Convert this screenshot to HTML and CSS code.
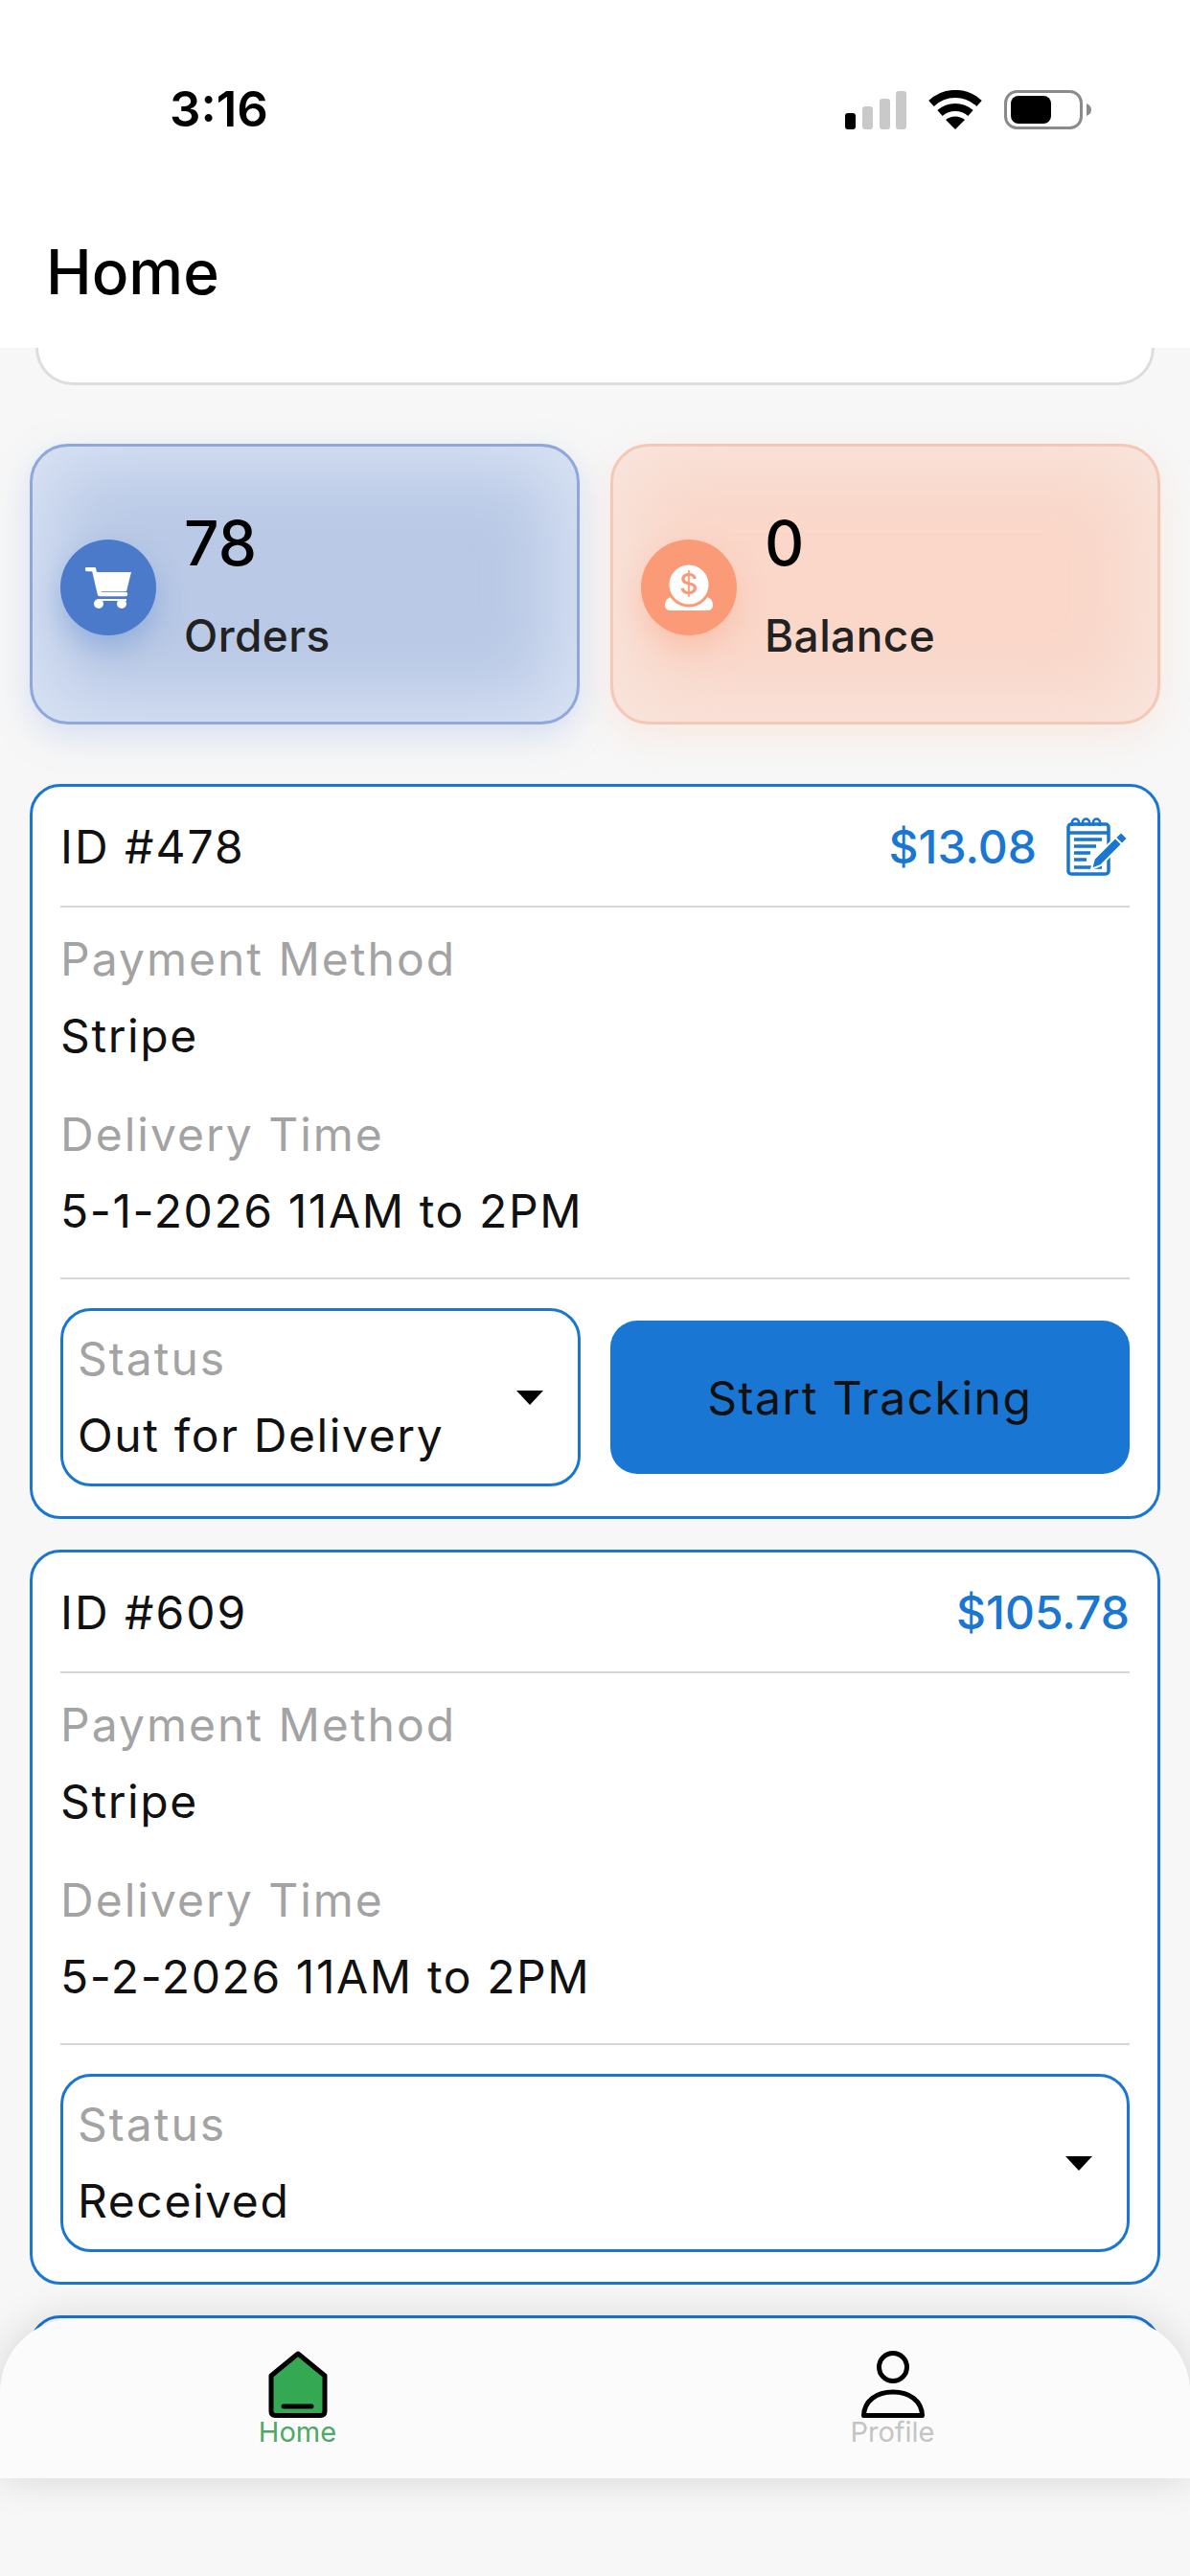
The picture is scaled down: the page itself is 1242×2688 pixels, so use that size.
FILE: index.html
```html
<!DOCTYPE html>
<html lang="en">

<head>
    <meta charset="UTF-8">
    <meta name="viewport" content="width=device-width, initial-scale=1.0">
    <title>Home</title>
    <link rel="stylesheet" href="styles.css">
</head>

<body>

    <header class="top">
        <div class="status-bar">
            <span class="time">3:16</span>
            <svg class="status-icons" width="257" height="41" viewBox="0 0 257 41">
                <rect x="0" y="24" width="11" height="17" rx="3" fill="#000" />
                <rect x="18" y="17" width="11" height="24" rx="3" fill="#c9c9c9" />
                <rect x="36" y="9" width="11" height="32" rx="3" fill="#c9c9c9" />
                <rect x="53" y="1" width="11" height="40" rx="3" fill="#c9c9c9" />
                <g transform="translate(87 0)" fill="none" stroke="#000" stroke-width="8">
                    <path d="M3 14 A 36 36 0 0 1 53 14" />
                    <path d="M12 24 A 24 24 0 0 1 44 24" />
                    <path d="M18 31 A 16 16 0 0 1 38 31 L28 41 Z" fill="#000" stroke="none" />
                </g>
                <rect x="167.5" y="1.5" width="79" height="38" rx="12" fill="none" stroke="#8a8a8a" stroke-width="3" />
                <rect x="173" y="6" width="42" height="29" rx="8" fill="#000" />
                <path d="M252 14 Q257 16 257 20.500 Q257 25 252 27 Z" fill="#8a8a8a" />
            </svg>
        </div>
        <h1 class="title">Home</h1>
    </header>

    <main class="content">
        <div class="cut-card"></div>

        <section class="stats">
            <div class="stat stat-blue">
                <div class="stat-icon">
                    <svg width="48" height="43" viewBox="0 0 48 43">
                        <path d="M2 2 H9 L15 28 H42" fill="none" stroke="#fff" stroke-width="4.500" stroke-linecap="round" stroke-linejoin="round" />
                        <path d="M10 5 H48 L43 25 H15 Z" fill="#fff" />
                        <path d="M14 33 H43 V35 H14 Z" fill="#fff" />
                        <circle cx="14" cy="38" r="5" fill="#fff" />
                        <circle cx="38" cy="38" r="5" fill="#fff" />
                    </svg>
                </div>
                <div class="stat-text">
                    <div class="stat-num">78</div>
                    <div class="stat-label">Orders</div>
                </div>
            </div>
            <div class="stat stat-orange">
                <div class="stat-icon">
                    <svg width="50" height="48" viewBox="0 0 50 48">
                        <path d="M6 34 Q10 30 14 28 H36 Q40 30 44 34 Q50 36 50 42 Q50 48 44 48 H6 Q0 48 0 42 Q0 36 6 34 Z" fill="#fff" />
                        <circle cx="25" cy="21" r="22" fill="#fff" stroke="#fb9a76" stroke-width="3" />
                        <text x="25" y="31" text-anchor="middle" class="dollar">$</text>
                    </svg>
                </div>
                <div class="stat-text">
                    <div class="stat-num">0</div>
                    <div class="stat-label">Balance</div>
                </div>
            </div>
        </section>

        <!-- Orders -->
        <article class="order">
            <div class="order-head">
                <span class="order-id">ID #478</span>
                <div class="price-box">
                    <span class="price">$13.08</span>
                    <svg class="edit-icon" width="67" height="62" viewBox="0 0 67 62">
                        <rect x="3" y="8" width="42" height="52" rx="3" fill="#fff" stroke="#1976d2" stroke-width="3.500" />
                        <path d="M3 17 H45" stroke="#1976d2" stroke-width="3.500" />
                        <path d="M7 10 V6 A3.500 3.500 0 0 1 14 6 V10 M18 10 V6 A3.500 3.500 0 0 1 25 6 V10 M29 10 V6 A3.500 3.500 0 0 1 36 6 V10" fill="none" stroke="#1976d2" stroke-width="2.500" />
                        <path d="M9 24 H38 M9 31 H32 M9 38 H26 M9 45 H22 M9 53 H38" stroke="#1976d2" stroke-width="3.500" />
                        <path d="M30 44 L58 16 L65 23 L37 51 L27 55 Z" fill="#1976d2" stroke="#fff" stroke-width="2" />
                        <path d="M52 22 L59 29" stroke="#fff" stroke-width="2" />
                    </svg>
                </div>
            </div>
            <div class="order-info">
                <div class="label">Payment Method</div>
                <div class="value">Stripe</div>
                <div class="label label-next">Delivery Time</div>
                <div class="value">5-1-2026 11AM to 2PM</div>
            </div>
            <div class="order-actions">
                <div class="status-select">
                    <div>
                        <div class="label">Status</div>
                        <div class="value">Out for Delivery</div>
                    </div>
                    <span class="arrow"></span>
                </div>
                <button type="button" class="track-btn">Start Tracking</button>
            </div>
        </article>

        <article class="order">
            <div class="order-head">
                <span class="order-id">ID #609</span>
                <div class="price-box">
                    <span class="price">$105.78</span>
                </div>
            </div>
            <div class="order-info">
                <div class="label">Payment Method</div>
                <div class="value">Stripe</div>
                <div class="label label-next">Delivery Time</div>
                <div class="value">5-2-2026 11AM to 2PM</div>
            </div>
            <div class="order-actions">
                <div class="status-select">
                    <div>
                        <div class="label">Status</div>
                        <div class="value">Received</div>
                    </div>
                    <span class="arrow"></span>
                </div>
            </div>
        </article>

        <!-- next order is cut off by the tab bar -->
        <article class="order order-cut"></article>
    </main>

    <nav class="tabbar">
        <a href="#" class="tab tab-active">
            <svg width="62" height="70" viewBox="0 0 62 70">
                <path d="M31 3 L59 26 V63 Q59 67.500 54.500 67.500 H7.500 Q3 67.500 3 63 V26 Z" fill="#34a853" stroke="#000" stroke-width="5" stroke-linejoin="round" />
                <path d="M16 58 H45" stroke="#000" stroke-width="5" stroke-linecap="round" />
            </svg>
            <span>Home</span>
        </a>
        <a href="#" class="tab">
            <svg width="66" height="70" viewBox="0 0 66 70">
                <circle cx="33" cy="17" r="14.500" fill="none" stroke="#000" stroke-width="5" />
                <path d="M2.500 67.500 C3 52 16 43 33 43 C50 43 63 52 63.500 67.500 Z" fill="none" stroke="#000" stroke-width="5" stroke-linejoin="round" />
            </svg>
            <span>Profile</span>
        </a>
    </nav>

</body>

</html>
```

FILE: styles.css
```css
* {
    box-sizing: border-box;
}

html,
body {
    margin: 0;
    padding: 0;
}

body {
    position: relative;
    width: 1242px;
    height: 2688px;
    overflow: hidden;
    display: flex;
    flex-direction: column;
    font-family: Inter, "Noto Sans", sans-serif;
    background-color: #f7f7f7;
    color: #111;
}

.top {
    background-color: #fff;
    position: relative;
    z-index: 1;
    height: 363px;
}

.status-bar {
    display: flex;
    justify-content: space-between;
    align-items: center;
    padding: 84px 103px 0 177px;
}

.time {
    font-size: 51px;
    font-weight: 600;
    line-height: 60px;
    color: #000;
}

.title {
    margin: 0;
    padding: 100px 0 0 48px;
    font-size: 64px;
    font-weight: 500;
    line-height: 80px;
    color: #000;
}

.content {
    flex: 1;
    overflow: hidden;
    padding: 0 31px;
}

.cut-card {
    height: 39px;
    margin: 0 6px 61px;
    background-color: #fff;
    border: 3px solid #ddd;
    border-top: 0;
    border-radius: 0 0 40px 40px;
}

.stats {
    display: flex;
    gap: 32px;
    margin-bottom: 62px;
}

.stat {
    flex: 1;
    height: 293px;
    display: flex;
    align-items: center;
    gap: 29px;
    padding-left: 29px;
    border-radius: 40px;
}

.stat-blue {
    background-color: #b9c9e6;
    border: 3px solid #8ea8dc;
    box-shadow: inset 0 0 80px 20px rgba(226, 234, 247, 0.8), 0 12px 36px rgba(150, 175, 225, 0.35);
}

.stat-orange {
    background-color: #fad7c9;
    border: 3px solid #f5c8b6;
    box-shadow: inset 0 0 80px 20px rgba(248, 232, 226, 0.8), 0 12px 36px rgba(250, 205, 185, 0.35);
}

.stat-icon {
    width: 100px;
    height: 100px;
    flex-shrink: 0;
    display: flex;
    align-items: center;
    justify-content: center;
    border-radius: 50%;
    margin-top: 7px;
}

.stat-blue .stat-icon {
    background-color: #4a7ac9;
    box-shadow: 0 14px 30px rgba(74, 122, 201, 0.35);
}

.stat-orange .stat-icon {
    background-color: #fb9a76;
    box-shadow: 0 14px 30px rgba(251, 154, 118, 0.35);
}

.dollar {
    font-family: Inter, sans-serif;
    font-size: 30px;
    font-weight: 500;
    fill: #fb9a76;
}

.stat-text {
    margin-top: 10px;
}

.stat-num {
    font-size: 64px;
    font-weight: 500;
    line-height: 96px;
    color: #000;
}

.stat-label {
    font-size: 46px;
    font-weight: 500;
    line-height: 96px;
    letter-spacing: 0.4px;
    color: #222;
}

.order {
    height: 767px;
    margin-bottom: 32px;
    padding: 0 29px;
    background-color: #fff;
    border: 3px solid #1976d2;
    border-radius: 32px;
    font-size: 48px;
}

.order-cut {
    height: 100px;
    margin-bottom: 0;
}

.order-head {
    height: 124px;
    display: flex;
    justify-content: space-between;
    align-items: center;
    border-bottom: 2px solid #d6d6d6;
    box-sizing: content-box;
}

.order-id {
    letter-spacing: 2px;
}

.price-box {
    display: flex;
    align-items: center;
    gap: 30px;
}

.price {
    color: #1976d2;
    font-weight: 500;
}

.order-info {
    padding: 14px 0 29px;
    border-bottom: 2px solid #d6d6d6;
    box-sizing: content-box;
}

.label {
    color: #a3a3a3;
    line-height: 80px;
    letter-spacing: 2px;
}

.label-next {
    margin-top: 23px;
}

.value {
    line-height: 80px;
    letter-spacing: 1.600px;
}

.order-actions {
    display: grid;
    grid-auto-flow: column;
    grid-auto-columns: 1fr;
    align-items: center;
    gap: 31px;
    margin-top: 30px;
}

.status-select {
    height: 186px;
    display: flex;
    justify-content: space-between;
    align-items: center;
    padding: 0 36px 0 15px;
    border: 3px solid #1976d2;
    border-radius: 32px;
}

.arrow {
    width: 0;
    height: 0;
    border-left: 14px solid transparent;
    border-right: 14px solid transparent;
    border-top: 15px solid #000;
}

.track-btn {
    height: 160px;
    border: 0;
    border-radius: 28px;
    background-color: #1976d2;
    color: #111;
    font-family: inherit;
    font-size: 48px;
    letter-spacing: 1.500px;
}

.tabbar {
    position: absolute;
    left: 0;
    right: 0;
    top: 2420px;
    height: 166px;
    display: flex;
    padding-top: 33px;
    background-color: #fbfbfb;
    border-radius: 76px 76px 0 0;
    box-shadow: 0 0 44px rgba(0, 0, 0, 0.14);
}

.tab {
    flex: 1;
    display: flex;
    flex-direction: column;
    align-items: center;
    text-decoration: none;
    font-size: 29px;
    line-height: 30px;
    color: #c4c4c4;
}

.tab-active {
    color: #4ea866;
}
```
